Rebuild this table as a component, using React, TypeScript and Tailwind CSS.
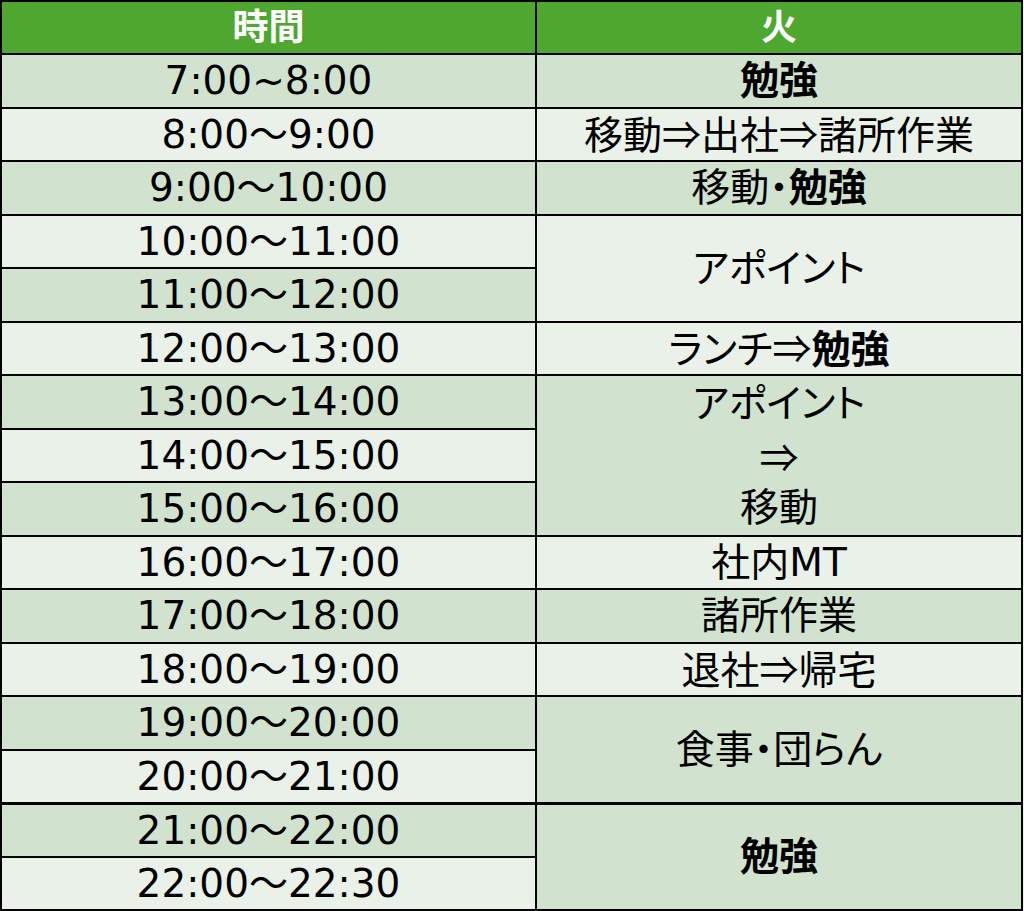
const times = [
  "7:00~8:00",
  "8:00～9:00",
  "9:00～10:00",
  "10:00～11:00",
  "11:00～12:00",
  "12:00～13:00",
  "13:00～14:00",
  "14:00～15:00",
  "15:00～16:00",
  "16:00～17:00",
  "17:00～18:00",
  "18:00～19:00",
  "19:00～20:00",
  "20:00～21:00",
  "21:00～22:00",
  "22:00～22:30",
];

const dark = "bg-[#d1e2cf]";
const light = "bg-[#eaf1e8]";

// full-width arrow, as in the CJK font
const Arr = () => (
  <span className="font-['Noto_Sans_CJK_JP',sans-serif] leading-none [font-feature-settings:normal]">⇒</span>
);

// right column: which row it starts on, how many rows it spans, content
const tasks: { start: number; span: number; content: React.ReactNode }[] = [
  { start: 0, span: 1, content: <b>勉強</b> },
  { start: 1, span: 1, content: <>移動<Arr />出社<Arr />諸所作業</> },
  { start: 2, span: 1, content: <>移動・<b>勉強</b></> },
  { start: 3, span: 2, content: "アポイント" },
  { start: 5, span: 1, content: <>ランチ<Arr /><b>勉強</b></> },
  {
    start: 6,
    span: 3,
    content: (
      <div className="flex flex-col items-center gap-[13px]">
        <span>アポイント</span>
        <Arr />
        <span>移動</span>
      </div>
    ),
  },
  { start: 9, span: 1, content: "社内MT" },
  { start: 10, span: 1, content: "諸所作業" },
  { start: 11, span: 1, content: <>退社<Arr />帰宅</> },
  { start: 12, span: 2, content: "食事・団らん" },
  { start: 14, span: 2, content: <b>勉強</b> },
];

export default function App() {
  return (
    <div className="min-h-screen w-full bg-[#f0f0f0] font-['DejaVu_Sans','Noto_Sans_CJK_JP',sans-serif] [font-feature-settings:'palt']">
      <table className="w-[1021px] table-fixed border-collapse text-black">
        <colgroup>
          <col className="w-[535px]" />
          <col className="w-[486px]" />
        </colgroup>
        <thead>
          <tr className="h-[53px] bg-[#4ea72e]">
            <th className="border-2 border-black p-0 text-[36px] font-bold leading-none text-white">時間</th>
            <th className="border-2 border-black p-0 text-[36px] font-bold leading-none text-white">火</th>
          </tr>
        </thead>
        <tbody>
          {times.map((t, i) => {
            const task = tasks.find((k) => k.start === i);
            const bg = i % 2 === 0 ? dark : light;
            const thick = i === 13 ? "border-b-[3px]" : "";
            return (
              <tr key={t} className="h-[53.5px]">
                <td className={`${bg} ${thick} border-2 border-black p-0 text-center text-[39px] leading-none`}>{t}</td>
                {task && (
                  <td
                    rowSpan={task.span}
                    className={`${bg} ${task.start + task.span === 14 ? "border-b-[3px]" : ""} border-2 border-black p-0 text-center text-[39px] leading-none`}
                  >
                    {task.content}
                  </td>
                )}
              </tr>
            );
          })}
        </tbody>
      </table>
    </div>
  );
}
